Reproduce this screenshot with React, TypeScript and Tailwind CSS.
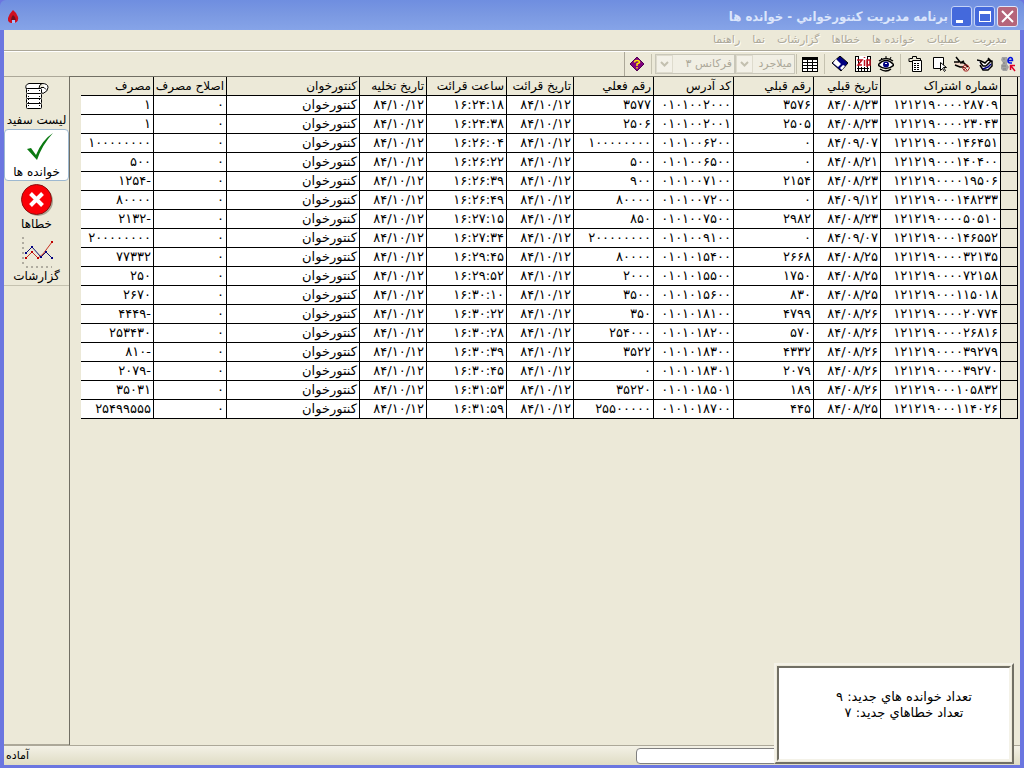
import type { ReactNode } from "react";

const MENU = ["مديريت", "عمليات", "خوانده ها", "خطاها", "گزارشات", "نما", "راهنما"];

const COLUMNS = [
    { title: "شماره اشتراک", width: "w-[120px]" },
    { title: "تاريخ قبلي", width: "w-[67px]" },
    { title: "رقم قبلي", width: "w-[80px]" },
    { title: "كد آدرس", width: "w-[80px]" },
    { title: "رقم فعلي", width: "w-[80px]" },
    { title: "تاريخ قرائت", width: "w-[67px]" },
    { title: "ساعت قرائت", width: "w-[80px]" },
    { title: "تاريخ تخليه", width: "w-[67px]" },
    { title: "كنتورخوان", width: "" },
    { title: "اصلاح مصرف", width: "w-[73px]" },
    { title: "مصرف", width: "w-[73px]" },
];

// subscription, previous date, previous value, address, current value, reading time, usage
const READINGS = [
    ["۱۲۱۲۱۹۰۰۰۰۲۸۷۰۹", "۸۴/۰۸/۲۳", "۳۵۷۶", "۰۱۰۱۰۰۲۰۰۰", "۳۵۷۷", "۱۶:۲۴:۱۸", "۱"],
    ["۱۲۱۲۱۹۰۰۰۰۲۳۰۴۳", "۸۴/۰۸/۲۳", "۲۵۰۵", "۰۱۰۱۰۰۲۰۰۱", "۲۵۰۶", "۱۶:۲۴:۳۸", "۱"],
    ["۱۲۱۲۱۹۰۰۰۱۴۶۴۵۱", "۸۴/۰۹/۰۷", "۰", "۰۱۰۱۰۰۶۲۰۰", "۱۰۰۰۰۰۰۰۰", "۱۶:۲۶:۰۴", "۱۰۰۰۰۰۰۰۰"],
    ["۱۲۱۲۱۹۰۰۰۱۴۰۴۰۰", "۸۴/۰۸/۲۱", "۰", "۰۱۰۱۰۰۶۵۰۰", "۵۰۰", "۱۶:۲۶:۲۲", "۵۰۰"],
    ["۱۲۱۲۱۹۰۰۰۰۱۹۵۰۶", "۸۴/۰۸/۲۳", "۲۱۵۴", "۰۱۰۱۰۰۷۱۰۰", "۹۰۰", "۱۶:۲۶:۳۹", "-۱۲۵۴"],
    ["۱۲۱۲۱۹۰۰۰۱۴۸۲۳۳", "۸۴/۰۹/۱۲", "۰", "۰۱۰۱۰۰۷۲۰۰", "۸۰۰۰۰", "۱۶:۲۶:۴۹", "۸۰۰۰۰"],
    ["۱۲۱۲۱۹۰۰۰۰۵۰۵۱۰", "۸۴/۰۸/۲۳", "۲۹۸۲", "۰۱۰۱۰۰۷۵۰۰", "۸۵۰", "۱۶:۲۷:۱۵", "-۲۱۳۲"],
    ["۱۲۱۲۱۹۰۰۰۱۴۶۵۵۲", "۸۴/۰۹/۰۷", "۰", "۰۱۰۱۰۰۹۱۰۰", "۲۰۰۰۰۰۰۰۰", "۱۶:۲۷:۳۴", "۲۰۰۰۰۰۰۰۰"],
    ["۱۲۱۲۱۹۰۰۰۰۳۲۱۳۵", "۸۴/۰۸/۲۵", "۲۶۶۸", "۰۱۰۱۰۱۵۴۰۰", "۸۰۰۰۰", "۱۶:۲۹:۴۵", "۷۷۳۳۲"],
    ["۱۲۱۲۱۹۰۰۰۰۷۲۱۵۸", "۸۴/۰۸/۲۵", "۱۷۵۰", "۰۱۰۱۰۱۵۵۰۰", "۲۰۰۰", "۱۶:۲۹:۵۲", "۲۵۰"],
    ["۱۲۱۲۱۹۰۰۰۱۱۵۰۱۸", "۸۴/۰۸/۲۵", "۸۳۰", "۰۱۰۱۰۱۵۶۰۰", "۳۵۰۰", "۱۶:۳۰:۱۰", "۲۶۷۰"],
    ["۱۲۱۲۱۹۰۰۰۰۲۰۷۷۴", "۸۴/۰۸/۲۶", "۴۷۹۹", "۰۱۰۱۰۱۸۱۰۰", "۳۵۰", "۱۶:۳۰:۲۲", "-۴۴۴۹"],
    ["۱۲۱۲۱۹۰۰۰۰۲۶۸۱۶", "۸۴/۰۸/۲۶", "۵۷۰", "۰۱۰۱۰۱۸۲۰۰", "۲۵۴۰۰۰", "۱۶:۳۰:۲۸", "۲۵۳۴۳۰"],
    ["۱۲۱۲۱۹۰۰۰۰۳۹۲۷۹", "۸۴/۰۸/۲۶", "۴۳۳۲", "۰۱۰۱۰۱۸۳۰۰", "۳۵۲۲", "۱۶:۳۰:۳۹", "-۸۱۰"],
    ["۱۲۱۲۱۹۰۰۰۰۳۹۲۷۰", "۸۴/۰۸/۲۶", "۲۰۷۹", "۰۱۰۱۰۱۸۳۰۱", "۰", "۱۶:۳۰:۴۵", "-۲۰۷۹"],
    ["۱۲۱۲۱۹۰۰۰۱۰۵۸۳۲", "۸۴/۰۸/۲۶", "۱۸۹", "۰۱۰۱۰۱۸۵۰۱", "۳۵۲۲۰", "۱۶:۳۱:۵۳", "۳۵۰۳۱"],
    ["۱۲۱۲۱۹۰۰۰۱۱۴۰۲۶", "۸۴/۰۸/۲۵", "۴۴۵", "۰۱۰۱۰۱۸۷۰۰", "۲۵۵۰۰۰۰۰", "۱۶:۳۱:۵۹", "۲۵۴۹۹۵۵۵"],
];

function Icon({ size = 16, children }: { size?: number; children: ReactNode }) {
    return (
        <svg width={size} height={size} viewBox={`0 0 ${size} ${size}`} fill="none" className="shrink-0" aria-hidden="true">
            {children}
        </svg>
    );
}

const ConnectIcon = () => (
    <Icon>
        <path d="M2 1h5l1 3-1 4 2 3-2 4H3l-2-2V9l2-2-2-3z" fill="#a4a4a4" />
        <path d="M3 3h2M2 10h4M4 6v2M3 13h3" stroke="#808080" />
        <path d="M8 4.500h4.500q0-3-2-3T8 4.500q0 2.500 2 2.500h2" stroke="#0010e0" strokeWidth="1.500" />
        <path d="M10.500 14V9.500H15M11 10l4 5" stroke="#e00028" strokeWidth="1.500" />
    </Icon>
);

const WriteIcon = () => (
    <Icon>
        <path d="M0 4l4 1 4 3 4-5 3 2v5l-4 4H6L3 9z" fill="#fff" />
        <path d="M0 4l4 1 4 2 3-3 4 1v5l-4 4H6L3 9M3 6l3 4h3M11 2l3 3-5 5" stroke="#000" strokeWidth="1.500" />
        <path d="M6 13l5-2 3-3" stroke="#000080" strokeWidth="1.500" />
    </Icon>
);

const EraseIcon = () => (
    <Icon>
        <path d="M0 6l4-1 5 2 4 4-4 1-5-1-3-2z" fill="#f0d8c8" />
        <path d="M2 1l4 5 4 1 4 4M0 6h5M1 9l5 2h4M6 7l4-2" stroke="#000" strokeWidth="1.500" />
        <path d="M8.500 12l2-3h3l2 3-2 3h-3zM10 11l3 3M13 10l-3 4" stroke="#a02020" />
    </Icon>
);

const PageIcon = () => (
    <Icon>
        <path d="M2.500 1.500h10v11h-10z" fill="#fff" stroke="#000" />
        <path d="M9.500 6.500v8l2-2 2 3 1-1-2-3h3z" fill="#fff" stroke="#000" />
    </Icon>
);

const ListIcon = () => (
    <Icon>
        <path d="M4.500 4.500h9v11h-9z" fill="#fff" stroke="#000" />
        <path d="M1.500 2.500h3v-2h4v2h4v2M1 2.500v3h3" stroke="#000" />
        <path d="M6 7.500h6M6 9.500h6M6 11.500h6M6 13.500h6" stroke="#000" strokeDasharray="2 1" />
    </Icon>
);

const EyeIcon = () => (
    <Icon>
        <path d="M0 9q8-9 16 0q-8 7-16 0" fill="#fff" stroke="#000" strokeWidth="1.500" />
        <path d="M1 5q7-5 14 0M2 13q6 4 11 0" stroke="#000" strokeWidth="1.500" />
        <path d="M3 2l1 1M8 0v2M13 1l-1 2" stroke="#000" />
        <circle cx="8" cy="8.500" r="3" fill="#000080" />
        <path d="M7 7h2v1H7z" fill="#fff" />
    </Icon>
);

const ArchiveIcon = () => (
    <Icon>
        <path d="M0 0h16v16H0z" fill="#fff" />
        <path d="M.5 0v16M3.500 0v16M12.500 0v16M15.500 0v16M0 .5h4M12 .5h4M0 15.500h16M2 12.500h12M6.500 11v5M9.500 11v5" stroke="#000" />
        <path d="M2 4h5L3 9h4M9.500 4v6M9.500 1v1M12 11V4h3v5h-3" stroke="#c01020" strokeWidth="1.500" />
    </Icon>
);

const SaveIcon = () => (
    <Icon>
        <path d="M8 0l8 7-7 8-9-8z" fill="#000080" stroke="#000" />
        <path d="M4 3l5 5-3 3-5-4zM11 9l2 1-3 4-2-2z" fill="#fff" />
    </Icon>
);

const GridIcon = () => (
    <Icon>
        <path d="M0 1h16v14H0z" fill="#fff" />
        <path d="M0 1h16v3H0zM0 6h16v1H0zM0 9h16v1H0zM0 12h16v1H0zM0 15h16v1H0z" fill="#000" />
        <path d="M.5 1v15M5.500 1v15M10.500 1v15M15.500 1v15" stroke="#000" />
    </Icon>
);

const HelpIcon = () => (
    <Icon>
        <path d="M8 1l7 7-7 7-7-7z" fill="#800080" stroke="#500050" />
        <path d="M5.500 6.500q0-2 2.500-2t2.500 2L8 8v2M8 11v1.500" stroke="#ffe800" strokeWidth="1.500" />
    </Icon>
);

const ScrollIcon = () => (
    <Icon size={32}>
        <path d="M8 3.500q-4 1-3 5h13q0-4 3-5z" fill="#fff" stroke="#000" />
        <path d="M21 3.500q6 0 6 4t-5 6q-3-1-3-4t4-2l2 2" fill="#fff" stroke="#000" />
        <rect x="5.500" y="8.500" width="15" height="5" rx="1" fill="#fff" stroke="#000" />
        <rect x="5.500" y="13.500" width="15" height="5" rx="1" fill="#fff" stroke="#000" />
        <rect x="5.500" y="18.500" width="15" height="5" rx="1" fill="#fff" stroke="#000" />
        <rect x="5.500" y="23.500" width="15" height="5" rx="1" fill="#fff" stroke="#000" />
        <path d="M7.500 10v18M18.500 10v18" stroke="#000" strokeDasharray="1 2" />
    </Icon>
);

const CheckIcon = () => (
    <Icon size={32}>
        <path d="M6 17l4-1 5 7Q21 8 32 1Q21 13 16 28z" fill="#0b7a12" />
    </Icon>
);

const ErrorIcon = () => (
    <Icon size={32}>
        <circle cx="17" cy="17" r="15" fill="#a8a594" />
        <circle cx="15.500" cy="15.500" r="15" fill="#fb0007" stroke="#8c1010" />
        <path d="M9.500 9.500l12 12M21.500 9.500l-12 12" stroke="#fff" strokeWidth="4" />
    </Icon>
);

const ChartIcon = () => (
    <Icon size={32}>
        <path d="M2 1v30M5 31h26" stroke="#b0aca0" strokeWidth="2" strokeDasharray="2 3" />
        <path d="M5 22l6-6 6 6 5-4 9-12" stroke="#c83020" />
        <path d="M5 17l6-6 9 10 5-5 6 6" stroke="#101070" />
        <path d="M4 21h2v2H4zM10 15h2v2h-2zM16 21h2v2h-2zM30 5h2v2h-2z" fill="#c00000" />
        <path d="M4 16h2v2H4zM10 10h2v2h-2zM19 20h2v2h-2zM24 15h2v2h-2zM30 21h2v2h-2z" fill="#000080" />
    </Icon>
);

const SIDEBAR = [
    { label: "ليست سفيد", icon: <ScrollIcon /> },
    { label: "خوانده ها", icon: <CheckIcon />, active: true },
    { label: "خطاها", icon: <ErrorIcon /> },
    { label: "گزارشات", icon: <ChartIcon /> },
];

function ToolButton({ label, children }: { label: string; children: ReactNode }) {
    return (
        <button type="button" aria-label={label} className="flex h-6 w-[23px] items-center justify-center">
            {children}
        </button>
    );
}

const Separator = ({ tight = false }: { tight?: boolean }) => (
    <div className={`h-5 w-px bg-[#c5c2b0] ${tight ? "mx-px" : "mx-[3px]"}`} />
);

function Combo({ label, value, width }: { label: string; value: string; width: string }) {
    return (
        <div className={`relative ${width}`}>
            <select
                disabled
                aria-label={label}
                className="block h-5 w-full appearance-none border border-[#c9c7ba] bg-[#f1efe4] pr-[2px] text-[11px] leading-4 text-[#aca899] opacity-100"
            >
                <option>{value}</option>
            </select>
            <div className="pointer-events-none absolute left-px top-px flex h-[18px] w-[17px] items-center justify-center bg-[#f3f1e8] ring-1 ring-inset ring-[#dedbcd]">
                <svg width="9" height="6" viewBox="0 0 9 6" fill="none">
                    <path d="M1 1l3.500 3.500L8 1" stroke="#c3c0b0" strokeWidth="2" />
                </svg>
            </div>
        </div>
    );
}

function TitleBar() {
    return (
        <header className="flex h-[30px] shrink-0 items-center gap-[2px] rounded-t-md bg-linear-to-b from-[#6f8ee0] via-[#7b99e2] to-[#86a4e8] px-[6px] pt-[3px]">
            <button type="button" aria-label="بستن" className="flex size-[21px] items-center justify-center rounded-[3px] border border-[#dfe6fa] bg-[#b5657a]">
                <svg width="13" height="13" viewBox="0 0 13 13">
                    <path d="M1 1l11 11M12 1L1 12" stroke="#fff" strokeWidth="2" />
                </svg>
            </button>
            <button type="button" aria-label="بزرگ" className="flex size-[21px] items-center justify-center rounded-[3px] border border-[#c5d3f7] bg-[#4469dc]">
                <span className="h-[11px] w-3 border border-t-[3px] border-white" />
            </button>
            <button type="button" aria-label="کوچک" className="flex size-[21px] items-end justify-end rounded-[3px] border border-[#c5d3f7] bg-[#4469dc] pb-[3px] pl-[4px]">
                <span className="h-[3px] w-[7px] bg-white" />
            </button>
            <h1 className="mr-px flex-1 truncate font-['DejaVu_Sans_Condensed','DejaVu_Sans',sans-serif] text-[13px] font-bold text-[#dbe5fb]">
                برنامه مديريت كنتورخواني - خوانده ها
            </h1>
            <svg width="11" height="14" viewBox="0 0 11 14" className="ml-[2px]" aria-hidden="true">
                <path d="M5 0q4 3 5 7q1 6-5 6T0 8q1-4 5-8" fill="#d01020" />
                <path d="M5 5q-2 2-2 5h5q0-3-3-5" fill="#701020" />
                <path d="M4 10h3v3H4z" fill="#9fc0ff" />
            </svg>
        </header>
    );
}

function Toolbar() {
    return (
        <div className="flex h-[25px] shrink-0 items-center border-t border-white bg-[#ece9d8] pr-px">
            <ToolButton label="اتصال"><ConnectIcon /></ToolButton>
            <ToolButton label="ثبت"><WriteIcon /></ToolButton>
            <ToolButton label="حذف"><EraseIcon /></ToolButton>
            <ToolButton label="انتخاب"><PageIcon /></ToolButton>
            <ToolButton label="ليست"><ListIcon /></ToolButton>
            <Separator />
            <ToolButton label="نمايش"><EyeIcon /></ToolButton>
            <ToolButton label="بايگاني"><ArchiveIcon /></ToolButton>
            <ToolButton label="ذخيره"><SaveIcon /></ToolButton>
            <Separator />
            <ToolButton label="جدول"><GridIcon /></ToolButton>
            <Separator tight />
            <Combo label="شهر" value="ميلاجرد" width="w-[60px]" />
            <Combo label="فرکانس" value="فرکانس ۳" width="w-[80px]" />
            <Separator />
            <ToolButton label="راهنما"><HelpIcon /></ToolButton>
            <div className="h-full w-px bg-[#aca899]" />
        </div>
    );
}

function ReadingsTable() {
    return (
        <table className="w-full table-fixed border-separate border-spacing-0 text-[13px] leading-[18px]">
            <thead>
                <tr className="h-[19px] bg-[#ece9d8] text-[12px]">
                    <td className="w-[17px] border-b border-r border-black p-0" />
                    {COLUMNS.map((col) => (
                        <th
                            key={col.title}
                            scope="col"
                            className={`${col.width} overflow-hidden whitespace-nowrap border-b border-r border-black py-0 pl-0 pr-[2px] text-right font-normal`}
                        >
                            {col.title}
                        </th>
                    ))}
                </tr>
            </thead>
            <tbody>
                {READINGS.map(([id, prevDate, prev, address, current, time, usage]) => (
                    <tr key={id} className="h-[19px] bg-white">
                        <td className="border-b border-r border-black bg-[#ece9d8] p-0" />
                        {[id, prevDate, prev, address, current, "۸۴/۱۰/۱۲", time, "۸۴/۱۰/۱۲", "كنتورخوان", "۰", usage].map((value, i) => (
                            <td key={i} className="overflow-hidden whitespace-nowrap border-b border-r border-black py-0 pl-0 pr-[2px] text-right">
                                {value}
                            </td>
                        ))}
                    </tr>
                ))}
            </tbody>
        </table>
    );
}

export default function App() {
    return (
        <div
            dir="rtl"
            className="relative flex h-screen flex-col overflow-hidden bg-[#6b76e0] font-['DejaVu_Sans',sans-serif] text-black"
        >
            <TitleBar />

            <div className="mx-1 mb-[3px] flex min-h-0 flex-1 flex-col bg-[#ece9d8]">
                <nav className="flex h-[21px] shrink-0 items-center gap-3 border-b border-[#aca899] pr-[13px] text-[11px] text-[#aca899]">
                    {MENU.map((item) => (
                        <button key={item} type="button" disabled className="[text-shadow:1px_1px_0_#fff]">
                            {item}
                        </button>
                    ))}
                </nav>
                <Toolbar />

                <div className="flex min-h-0 flex-1">
                    <main className="min-w-0 flex-1 border-l border-t border-[#716f64] pl-[11px] pr-[2px]">
                        <ReadingsTable />
                    </main>
                    <aside className="w-[65px] shrink-0 border-b border-t border-[#aca899]">
                        {SIDEBAR.map((item) => (
                            <button
                                key={item.label}
                                type="button"
                                className={`flex h-[52px] w-full flex-col items-center rounded-sm border pt-[2px] text-[12px] leading-4 ${
                                    item.active ? "border-[#9db8d0] bg-white" : "border-transparent"
                                }`}
                            >
                                {item.icon}
                                <span className="whitespace-nowrap">{item.label}</span>
                            </button>
                        ))}
                        <div className="border-t border-[#c5c2b0]" />
                    </aside>
                </div>

                {/* Status bar */}
                <footer className="flex h-5 shrink-0 items-center border-t border-[#aca899] bg-linear-to-b from-[#f3f1e6] to-[#dfdcc4] pt-px text-[11px]">
                    <div className="mr-[80px] h-4 w-[304px] rounded-sm border border-[#808080] bg-white" />
                    <span className="mr-auto pl-[2px]">آماده</span>
                </footer>
            </div>

            {/* New readings notice, floats over the status bar */}
            <div
                role="status"
                className="absolute bottom-[4px] right-[10px] h-[101px] w-[240px] border-2 border-b-[#716f64] border-l-[#f4f2e8] border-r-[#716f64] border-t-[#f4f2e8] bg-[#ece9d8] p-px"
            >
                <div className="h-full border-2 border-b-[#f4f2e8] border-l-[#716f64] border-r-[#f4f2e8] border-t-[#716f64] bg-white pl-[20px] pt-[21px] text-center text-[13px] leading-4">
                    <p>تعداد خوانده هاي جديد: ۹</p>
                    <p>تعداد خطاهاي جديد: ۷</p>
                </div>
            </div>
        </div>
    );
}
